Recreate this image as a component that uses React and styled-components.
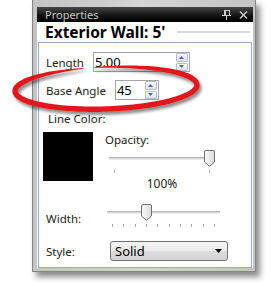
import React from 'react'
import styled, { createGlobalStyle } from 'styled-components'

const GlobalStyle = createGlobalStyle`
  html, body { margin: 0; padding: 0; background: #fff; }
  body { font-family: "Noto Sans", "Liberation Sans", sans-serif; color: #1c1c1c; }
  * { box-sizing: border-box; }
`

const Stage = styled.div`
  position: relative;
  width: 271px;
  height: 289px;
  padding-left: 32px;
  overflow: hidden;
`

const Window = styled.div`
  width: 224px;
  height: 272px;
  display: flex;
  flex-direction: column;
  padding: 7px 2px 3px 4px;
  border: 1px solid #858585;
  border-top: none;
  background: linear-gradient(90deg, #c4c4c4, #d4d4d4 50%, #c4c4c4);
  box-shadow: 4px 5px 6px rgba(0, 0, 0, 0.45);
`

const TitleBar = styled.div`
  height: 15px;
  flex: none;
  display: flex;
  align-items: center;
  padding: 0 5px 0 8px;
  background: linear-gradient(#464646, #151515 55%, #000);
  color: #c4c4c4;
  font-size: 11px;
  line-height: 15px;
`

const TitleIcons = styled.div`
  margin-left: auto;
  display: flex;
  align-items: center;
  gap: 8px;
`

const Content = styled.div`
  flex: 1;
  display: flex;
  flex-direction: column;
  background: #fff;
`

const Header = styled.div`
  height: 20px;
  flex: none;
  display: flex;
  align-items: center;
  padding-left: 8px;
`

const HeaderTitle = styled.div`
  font-size: 15.5px;
  font-weight: 700;
  line-height: 20px;
  color: #000;
  white-space: nowrap;
`

const HeaderRule = styled.div`
  flex: 1;
  height: 2px;
  margin: 0 3px 0 12px;
  background: #d9d9d9;
`

const Panel = styled.div`
  flex: 1;
  margin: 0 1px;
  border: 1px solid #95aac7;
  padding: 9px 0 0 4px;
  display: flex;
  flex-direction: column;
`

const FieldRow = styled.div`
  display: flex;
  align-items: center;
  gap: 9px;
  height: 20px;
  padding-left: 3px;
  margin-bottom: ${p => p.$gap || 0}px;
`

const Label = styled.div`
  font-size: 11.5px;
  line-height: 15px;
  white-space: nowrap;
  color: #1c1c1c;
  width: ${p => (p.$w ? `${p.$w}px` : 'auto')};
  flex: none;
`

const SpinInput = styled.div`
  width: ${p => p.$w}px;
  height: 20px;
  display: flex;
  align-items: center;
  border: 1px solid #a5a5a5;
  padding-left: 1px;
  font-size: 13px;
  color: #000;
`

const SpinButtons = styled.div`
  margin-left: auto;
  margin-right: 1px;
  width: 12px;
  height: 18px;
  display: flex;
  flex-direction: column;
  gap: 1px;
`

const SpinButton = styled.div`
  flex: 1;
  display: flex;
  align-items: center;
  justify-content: center;
  border: 1px solid #b6bccb;
  border-radius: 1px;
  background: linear-gradient(#f8f9fc, #dce1ec);
`

const SectionLabel = styled(Label)`
  margin: 11px 0 0 5px;
`

const ColorGrid = styled.div`
  display: flex;
  gap: 12px;
  margin-top: 6px;
`

const Swatch = styled.div`
  width: 50px;
  height: 49px;
  background: ${p => p.$color};
  flex: none;
`

const OpacityCol = styled.div`
  display: flex;
  flex-direction: column;
`

const SliderWrap = styled.div`
  margin: 3px 0 0 4px;
`

const Readout = styled.div`
  margin-top: 3px;
  font-size: 12px;
  line-height: 15px;
  text-align: center;
  color: #1c1c1c;
`

const SliderRow = styled.div`
  display: flex;
  align-items: flex-end;
  padding-left: 3px;
  margin-top: ${p => p.$top}px;
`

const SliderBox = styled.div`
  width: ${p => p.$w}px;
  flex: none;
`

const Rail = styled.div`
  position: relative;
  height: 17px;
  padding-top: 7px;
`

const Track = styled.div`
  height: 3px;
  border-top: 1px solid #b9b9b9;
  border-bottom: 1px solid #ececec;
  background: #d6d6d6;
`

const Thumb = styled.svg`
  position: absolute;
  top: 0;
`

const TickRow = styled.div`
  margin-top: 3px;
  height: 3px;
  display: flex;
  justify-content: space-between;
  padding: 0 5px;
`

const Tick = styled.div`
  width: 1px;
  height: 3px;
  background: #a9a9a9;
`

const StyleRow = styled.div`
  display: flex;
  align-items: center;
  padding-left: 3px;
  margin-top: 14px;
`

const Select = styled.div`
  width: 118px;
  height: 20px;
  margin-left: 3px;
  display: flex;
  align-items: center;
  justify-content: space-between;
  padding: 0 5px 0 4px;
  border: 1px solid #707070;
  border-radius: 3px;
  background: linear-gradient(#f3f3f3, #ebebeb 50%, #dddddd 50%, #d2d2d2);
  font-size: 13px;
  color: #000;
`

const Annotation = styled.svg`
  position: absolute;
  left: 0;
  top: 0;
  pointer-events: none;
`

const PinIcon = () => (
  <svg width="9" height="10" viewBox="0 0 9 10" shapeRendering="crispEdges">
    <rect x="2" y="0" width="5" height="5" fill="none" stroke="#cdcdcd" strokeWidth="1" />
    <rect x="2" y="0" width="2" height="5" fill="#cdcdcd" />
    <rect x="0" y="5" width="9" height="1" fill="#cdcdcd" />
    <rect x="4" y="6" width="1" height="4" fill="#cdcdcd" />
  </svg>
)

const CloseIcon = () => (
  <svg width="9" height="8" viewBox="0 0 9 8">
    <path d="M1 0.5 L8 7.5 M8 0.5 L1 7.5" stroke="#cdcdcd" strokeWidth="1.4" />
  </svg>
)

const Arrow = ({ down }) => (
  <svg width="5" height="3" viewBox="0 0 5 3">
    <path d={down ? 'M0 0 H5 L2.5 3 Z' : 'M0 3 H5 L2.5 0 Z'} fill="#4c62a8" />
  </svg>
)

function NumberField({ value, width }) {
  return (
    <SpinInput $w={width}>
      {value}
      <SpinButtons>
        <SpinButton><Arrow /></SpinButton>
        <SpinButton><Arrow down /></SpinButton>
      </SpinButtons>
    </SpinInput>
  )
}

function Slider({ width, value, ticks }) {
  const left = value * (width - 11)
  return (
    <SliderBox $w={width}>
      <Rail>
        <Track />
        <Thumb width="11" height="17" viewBox="0 0 11 17" style={{ left }}>
          <defs>
            <linearGradient id="thumbFill" x1="0" y1="0" x2="1" y2="0">
              <stop offset="0" stopColor="#fbfbfb" />
              <stop offset="1" stopColor="#d9d9d9" />
            </linearGradient>
          </defs>
          <path
            d="M2 0.5 H9 Q10.5 0.5 10.5 2 V12 L5.5 16.3 L0.5 12 V2 Q0.5 0.5 2 0.5 Z"
            fill="url(#thumbFill)"
            stroke="#6e6e6e"
          />
        </Thumb>
      </Rail>
      <TickRow>
        {Array.from({ length: ticks }).map((_, i) => <Tick key={i} />)}
      </TickRow>
    </SliderBox>
  )
}

// hand-drawn red ring round the Base Angle row
const ringPath = (() => {
  const cx = 106, cy = 88, rx = 91, ry = 21
  const rot = (-2 * Math.PI) / 180
  const a0 = (-97 * Math.PI) / 180
  const a1 = (256 * Math.PI) / 180
  const n = 160
  const c = Math.cos(rot), s = Math.sin(rot)
  const pt = a => {
    const x = rx * Math.cos(a), y = ry * Math.sin(a)
    return [cx + x * c - y * s, cy + x * s + y * c]
  }
  const outer = [], inner = []
  for (let i = 0; i <= n; i++) {
    const t = i / n
    const a = a0 + (a1 - a0) * t
    const [x, y] = pt(a)
    const [x2, y2] = pt(a + 0.001)
    const len = Math.hypot(x2 - x, y2 - y)
    const dx = (x2 - x) / len, dy = (y2 - y) / len
    const ramp = Math.min(1, t / 0.22, (1 - t) / 0.18)
    const hw = 0.4 + 2.3 * Math.sin((ramp * Math.PI) / 2)
    outer.push([x - dy * hw, y + dx * hw])
    inner.push([x + dy * hw, y - dx * hw])
  }
  const pts = outer.concat(inner.reverse())
  return 'M' + pts.map(p => p[0].toFixed(2) + ' ' + p[1].toFixed(2)).join(' L') + ' Z'
})()

export default function App() {
  return (
    <Stage>
      <GlobalStyle />
      <Window>
        <TitleBar>
          Properties
          <TitleIcons>
            <PinIcon />
            <CloseIcon />
          </TitleIcons>
        </TitleBar>
        <Content>
          <Header>
            <HeaderTitle>Exterior Wall: 5'</HeaderTitle>
            <HeaderRule />
          </Header>
          <Panel>
            <FieldRow $gap={8}>
              <Label>Length</Label>
              <NumberField value="5.00" width={97} />
            </FieldRow>
            <FieldRow>
              <Label>Base Angle</Label>
              <NumberField value="45" width={44} />
            </FieldRow>
            <SectionLabel>Line Color:</SectionLabel>
            <ColorGrid>
              <Swatch $color="#000" />
              <OpacityCol>
                <Label>Opacity:</Label>
                <SliderWrap>
                  <Slider width={106} value={1} ticks={2} />
                  <Readout>100%</Readout>
                </SliderWrap>
              </OpacityCol>
            </ColorGrid>
            <SliderRow $top={13}>
              <Label $w={61} style={{ marginBottom: 1 }}>Width:</Label>
              <Slider width={113} value={3 / 9} ticks={10} />
            </SliderRow>
            <StyleRow>
              <Label $w={61}>Style:</Label>
              <Select>
                Solid
                <svg width="7" height="4" viewBox="0 0 7 4">
                  <path d="M0 0 H7 L3.5 4 Z" fill="#000" />
                </svg>
              </Select>
            </StyleRow>
          </Panel>
        </Content>
      </Window>
      <Annotation width="271" height="289" viewBox="0 0 271 289">
        <defs>
          <filter id="ringShadow" x="-10%" y="-40%" width="120%" height="180%">
            <feDropShadow dx="2" dy="3" stdDeviation="1.8" floodColor="#000" floodOpacity="0.45" />
          </filter>
        </defs>
        <path d={ringPath} fill="#e3191f" filter="url(#ringShadow)" />
      </Annotation>
    </Stage>
  )
}
